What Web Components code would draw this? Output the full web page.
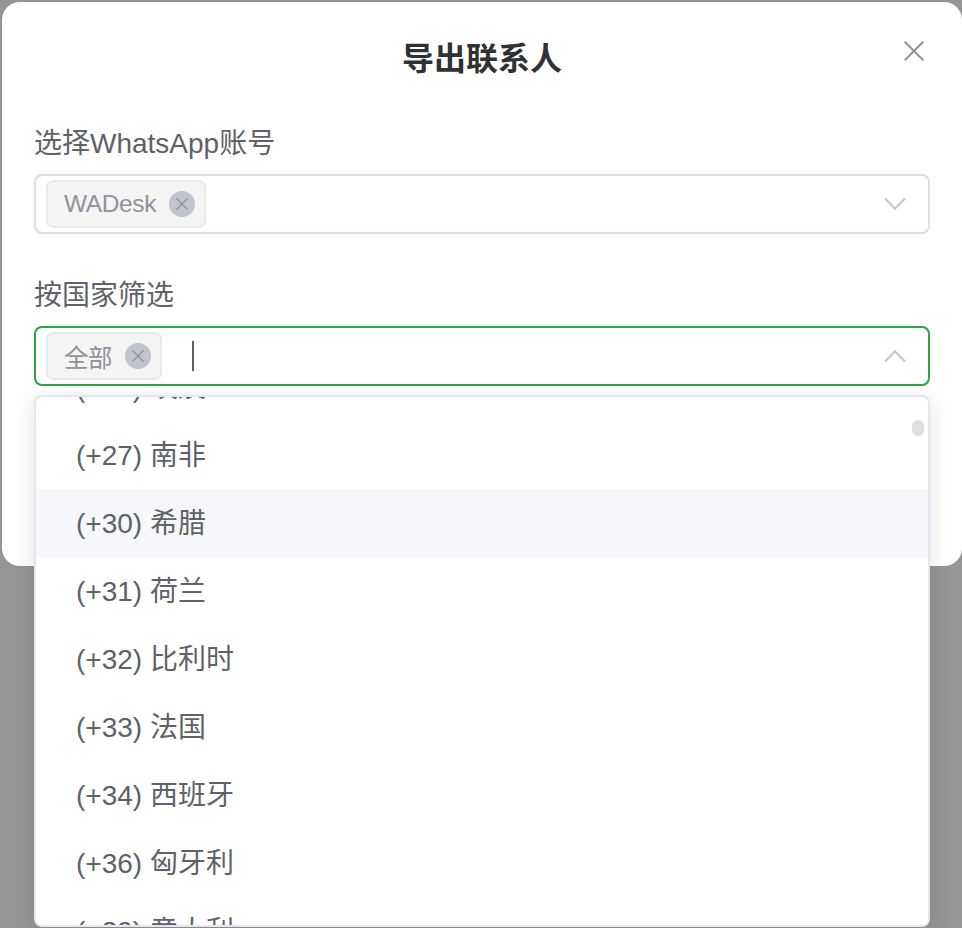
<!DOCTYPE html>
<html lang="zh">
<head>
<meta charset="utf-8">
<title>导出联系人</title>
<style>
  html, body { margin: 0; height: 928px; overflow: hidden; }
  body {
    background: #959595;
    font-family: "Liberation Sans", "Noto Sans CJK SC", sans-serif;
    color: #606266;
  }
</style>
</head>
<body>
<export-dialog heading="导出联系人">
  <form-field label="选择WhatsApp账号">
    <tag-select><select-chip>WADesk</select-chip></tag-select>
  </form-field>
  <form-field label="按国家筛选">
    <tag-select open>
      <select-chip>全部</select-chip>
      <option-list slot="menu">
        <option-row>(+20) 埃及</option-row>
        <option-row>(+27) 南非</option-row>
        <option-row hover>(+30) 希腊</option-row>
        <option-row>(+31) 荷兰</option-row>
        <option-row>(+32) 比利时</option-row>
        <option-row>(+33) 法国</option-row>
        <option-row>(+34) 西班牙</option-row>
        <option-row>(+36) 匈牙利</option-row>
        <option-row>(+39) 意大利</option-row>
      </option-list>
    </tag-select>
  </form-field>
</export-dialog>

<script>
class ExportDialog extends HTMLElement {
    constructor() {
        super();
        this.attachShadow({ mode: 'open' });
    }
    connectedCallback() {
        this.shadowRoot.innerHTML = `
            <style>
                :host {
                    display: block;
                    box-sizing: border-box;
                    width: 960px;
                    height: 564px;
                    margin: 2px 0 0 2px;
                    padding: 0 32px;
                    background: #fff;
                    border-radius: 18px;
                    position: relative;
                }
                h1 {
                    margin: 0;
                    padding-top: 36px;
                    height: 88px;
                    box-sizing: border-box;
                    font-size: 32px;
                    line-height: 42px;
                    font-weight: bold;
                    text-align: center;
                    color: #303133;
                }
                .close {
                    position: absolute;
                    top: 39px;
                    right: 38px;
                    width: 20px;
                    height: 20px;
                    display: block;
                }
                .fields { padding-top: 28px; }
            </style>
            <h1>${this.getAttribute('heading')}</h1>
            <svg class="close" viewBox="0 0 20 20" fill="none" stroke="#909399" stroke-width="2">
                <path d="M0.7 0.7 L19.3 19.3 M19.3 0.7 L0.7 19.3"/>
            </svg>
            <div class="fields"><slot></slot></div>
        `;
    }
}

class FormField extends HTMLElement {
    constructor() {
        super();
        this.attachShadow({ mode: 'open' });
    }
    connectedCallback() {
        this.shadowRoot.innerHTML = `
            <style>
                :host { display: block; margin-bottom: 36px; }
                label {
                    display: block;
                    font-size: 28px;
                    line-height: 52px;
                    margin-bottom: 4px;
                    color: #606266;
                }
            </style>
            <label>${this.getAttribute('label')}</label>
            <slot></slot>
        `;
    }
}

class TagSelect extends HTMLElement {
    constructor() {
        super();
        this.attachShadow({ mode: 'open' });
    }
    connectedCallback() {
        const open = this.hasAttribute('open');
        const arrow = open ? 'M1 11.5 L11 1.5 L21 11.5' : 'M1 0.5 L11 10.5 L21 0.5';
        this.shadowRoot.innerHTML = `
            <style>
                :host { display: block; position: relative; }
                .box {
                    box-sizing: border-box;
                    height: 60px;
                    width: 896px;
                    display: flex;
                    align-items: center;
                    padding: 0 22px 0 10px;
                    border: 2px solid ${open ? '#28a745' : '#dcdfe6'};
                    border-radius: 8px;
                    background: #fff;
                }
                .chips { display: flex; align-items: center; }
                .caret {
                    width: 2px;
                    height: 30px;
                    margin-left: 30px;
                    background: #606266;
                    display: ${open ? 'block' : 'none'};
                }
                .arrow { margin-left: auto; width: 22px; height: 13px; display: block; }
            </style>
            <div class="box">
                <div class="chips"><slot></slot></div>
                <div class="caret"></div>
                <svg class="arrow" viewBox="0 0 22 13" fill="none" stroke="#c0c4cc" stroke-width="2">
                    <path d="${arrow}"/>
                </svg>
            </div>
            <slot name="menu"></slot>
        `;
    }
}

class SelectChip extends HTMLElement {
    constructor() {
        super();
        this.attachShadow({ mode: 'open' });
    }
    connectedCallback() {
        this.shadowRoot.innerHTML = `
            <style>
                :host {
                    display: flex;
                    align-items: center;
                    box-sizing: border-box;
                    height: 48px;
                    padding: 0 9px 0 16px;
                    gap: 13px;
                    background: #f4f4f5;
                    border: 2px solid #e9e9eb;
                    border-radius: 7px;
                    font-size: 24.5px;
                    letter-spacing: -0.4px;
                    color: #909399;
                }
                .x {
                    width: 26px;
                    height: 26px;
                    border-radius: 50%;
                    background: #c0c4cc;
                    display: flex;
                    align-items: center;
                    justify-content: center;
                }
            </style>
            <slot></slot>
            <span class="x">
                <svg width="12" height="12" viewBox="0 0 12 12" fill="none" stroke="#909399" stroke-width="1.3">
                    <path d="M0.5 0.5 L11.5 11.5 M11.5 0.5 L0.5 11.5"/>
                </svg>
            </span>
        `;
    }
}

class OptionList extends HTMLElement {
    constructor() {
        super();
        this.attachShadow({ mode: 'open' });
    }
    connectedCallback() {
        this.shadowRoot.innerHTML = `
            <style>
                :host {
                    display: block;
                    position: absolute;
                    top: 69px;
                    left: 0;
                    box-sizing: border-box;
                    width: 896px;
                    height: 532px;
                    background: #fff;
                    border: 2px solid #e4e7ed;
                    border-radius: 8px;
                    box-shadow: 0 4px 21px rgba(0, 0, 0, 0.12);
                    overflow: hidden;
                }
                .rows { margin-top: -44px; }
                .thumb {
                    position: absolute;
                    top: 23px;
                    right: 4px;
                    width: 12px;
                    height: 16px;
                    border-radius: 6px;
                    background: #dddfe2;
                }
            </style>
            <div class="rows"><slot></slot></div>
            <div class="thumb"></div>
        `;
    }
}

class OptionRow extends HTMLElement {
    constructor() {
        super();
        this.attachShadow({ mode: 'open' });
    }
    connectedCallback() {
        this.shadowRoot.innerHTML = `
            <style>
                :host {
                    display: block;
                    height: 68px;
                    line-height: 70px;
                    padding-left: 40px;
                    font-size: 28px;
                    color: #606266;
                    background: ${this.hasAttribute('hover') ? '#f5f7fa' : 'transparent'};
                }
            </style>
            <slot></slot>
        `;
    }
}

customElements.define('export-dialog', ExportDialog);
customElements.define('form-field', FormField);
customElements.define('tag-select', TagSelect);
customElements.define('select-chip', SelectChip);
customElements.define('option-list', OptionList);
customElements.define('option-row', OptionRow);
</script>
</body>
</html>
